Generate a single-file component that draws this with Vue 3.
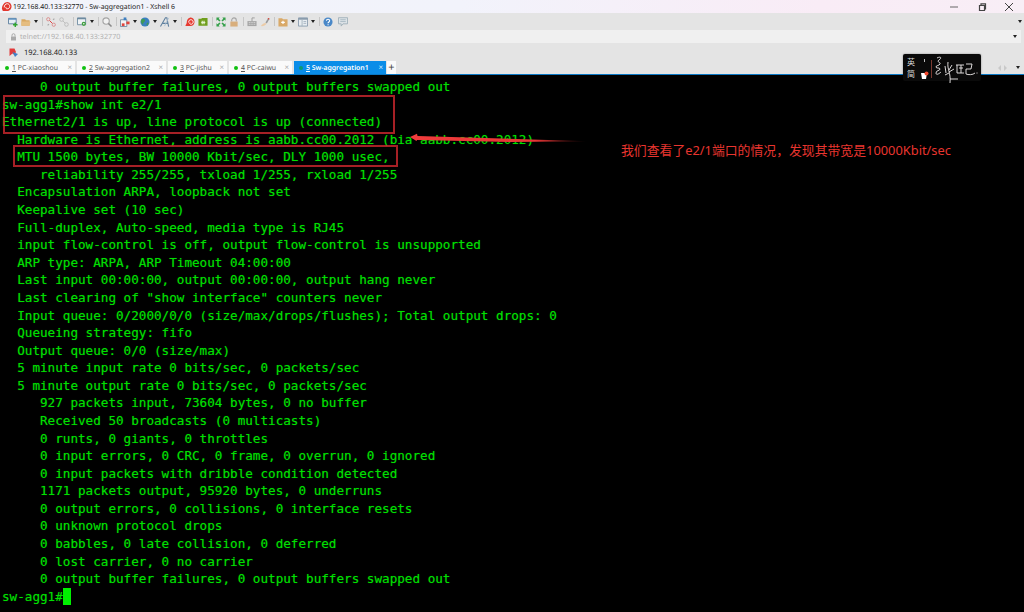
<script setup>
const lines = [
  '     0 output buffer failures, 0 output buffers swapped out',
  'sw-agg1#show int e2/1',
  'Ethernet2/1 is up, line protocol is up (connected)',
  '  Hardware is Ethernet, address is aabb.cc00.2012 (bia aabb.cc00.2012)',
  '  MTU 1500 bytes, BW 10000 Kbit/sec, DLY 1000 usec,',
  '     reliability 255/255, txload 1/255, rxload 1/255',
  '  Encapsulation ARPA, loopback not set',
  '  Keepalive set (10 sec)',
  '  Full-duplex, Auto-speed, media type is RJ45',
  '  input flow-control is off, output flow-control is unsupported',
  '  ARP type: ARPA, ARP Timeout 04:00:00',
  '  Last input 00:00:00, output 00:00:00, output hang never',
  '  Last clearing of "show interface" counters never',
  '  Input queue: 0/2000/0/0 (size/max/drops/flushes); Total output drops: 0',
  '  Queueing strategy: fifo',
  '  Output queue: 0/0 (size/max)',
  '  5 minute input rate 0 bits/sec, 0 packets/sec',
  '  5 minute output rate 0 bits/sec, 0 packets/sec',
  '     927 packets input, 73604 bytes, 0 no buffer',
  '     Received 50 broadcasts (0 multicasts)',
  '     0 runts, 0 giants, 0 throttles',
  '     0 input errors, 0 CRC, 0 frame, 0 overrun, 0 ignored',
  '     0 input packets with dribble condition detected',
  '     1171 packets output, 95920 bytes, 0 underruns',
  '     0 output errors, 0 collisions, 0 interface resets',
  '     0 unknown protocol drops',
  '     0 babbles, 0 late collision, 0 deferred',
  '     0 lost carrier, 0 no carrier',
  '     0 output buffer failures, 0 output buffers swapped out',
]
const tabs = [
  { n: '1', label: ' PC-xiaoshou', w: 75 },
  { n: '2', label: ' Sw-aggregation2', w: 89 },
  { n: '3', label: ' PC-jishu', w: 59 },
  { n: '4', label: ' PC-caiwu', w: 63 },
]
</script>

<template>
  <div class="win">
    <div class="title">
      <svg class="logo" viewBox="0 0 12 12" width="11" height="11">
        <path d="M1 8.500C1 4 4 1 7 1s4.500 2.500 4.500 5-2 5-5 5H2z" fill="#e2382f" />
        <path d="M3.500 7c0-2.500 1.500-4 3.300-4S9.500 4.500 9.500 6 8.200 8.500 6.800 8.500 5 7.500 5.500 6.500" fill="none" stroke="#fff" stroke-width="1" />
      </svg>
      <span class="title-text">192.168.40.133:32770 - Sw-aggregation1 - Xshell 6</span>
      <div class="win-ctrl">
        <svg width="10" height="10" viewBox="0 0 10 10"><path d="M1 5h8" stroke="#666" /></svg>
        <svg width="10" height="10" viewBox="0 0 10 10"><path d="M2.500 3.500h5v5h-5zM4 3.500V1.800h4.500v5H7.500" fill="none" stroke="#444" stroke-width="1.200" /></svg>
        <svg width="10" height="10" viewBox="0 0 10 10"><path d="M1 1l8 8M9 1l-8 8" stroke="#444" /></svg>
      </div>
    </div>

    <div class="toolbar">
      <svg class="ic" viewBox="0 0 11 11"><path d="M.5 1.500h8.500v6H.5z" fill="#e6eef5" stroke="#5a7d9c" /><path d="M.5 1.500h8.500v1.500H.5z" fill="#5a8fc0" /><path d="M8 6v5M5.500 8.500h5" stroke="#2fa52f" stroke-width="1.600" /></svg>
      <svg class="ic" viewBox="0 0 11 11"><path d="M.5 2.500h4l1 1h4v6H.5z" fill="#d9a860" /><path d="M.5 5h10l-1 4.500H.5z" fill="#e5bd80" /></svg>
      <i class="caret"></i>
      <i class="sep"></i>
      <svg class="ic" viewBox="0 0 11 11"><circle cx="2.500" cy="2.500" r="1.800" fill="none" stroke="#d98a8a" /><circle cx="8.500" cy="8.500" r="1.800" fill="none" stroke="#d98a8a" /><path d="M4 4l3 3" stroke="#d33" /><path d="M8 2l1 1M2 8l1 1" stroke="#aaa" stroke-width="2" /></svg>
      <svg class="ic" viewBox="0 0 11 11"><circle cx="2.800" cy="2.800" r="2" fill="none" stroke="#bbb" /><circle cx="8.200" cy="8.200" r="2" fill="none" stroke="#bbb" /><path d="M4.300 4.300l2.400 2.400" stroke="#bbb" /></svg>
      <i class="sep"></i>
      <svg class="ic" viewBox="0 0 11 11"><path d="M.5 1h9v7.500h-9z" fill="#eef2f5" stroke="#6d8aa0" /><path d="M.5 1h9v1.500h-9z" fill="#6d8aa0" /><circle cx="7.500" cy="7.500" r="2.300" fill="#3f9f3f" /><circle cx="7.500" cy="7.500" r=".8" fill="#fff" /></svg>
      <i class="caret"></i>
      <i class="sep"></i>
      <svg class="ic" viewBox="0 0 11 11"><circle cx="4.500" cy="4.500" r="3.500" fill="#f2f2f2" stroke="#a5a5a5" stroke-width="1.200" /><path d="M7 7l3.500 3.500" stroke="#8a8a8a" stroke-width="1.600" /></svg>
      <i class="sep"></i>
      <svg class="ic" viewBox="0 0 11 11"><path d="M.5 3h7v7.500h-7z" fill="#f3f3f3" stroke="#6f8ba5" /><path d="M4 .5h3v3H4z" fill="#3e7fc1" /><path d="M7 5h3.500v3H7z" fill="#e0453c" /><path d="M2 7h3v3H2z" fill="#e0453c" /></svg>
      <i class="caret"></i>
      <svg class="ic" viewBox="0 0 11 11"><circle cx="5.500" cy="5.500" r="5" fill="#3a7fc0" /><path d="M3 2c2 0 3 1 2.500 2.500S3 6 3.500 8 1 6.500 1 5 2 2 3 2zM8 6l1.500.500L8 9.500 7 8z" fill="#3f9a55" /></svg>
      <i class="caret"></i>
      <svg class="ic" viewBox="0 0 11 11"><path d="M.5 10.500L6 .8h1.500L9.500 10.500M3 7h6" fill="none" stroke="#5e7f9e" stroke-width="1.200" /><path d="M5 10L9.500 1" stroke="#a8bfd3" /></svg>
      <i class="caret"></i>
      <i class="sep"></i>
      <svg class="ic" viewBox="0 0 11 11"><path d="M.5 10c0-2 1.500-2 1.500-4.500S4 .5 6.500.5 10.500 3 10.500 5.500 8.500 10 6 10z" fill="#e63a30" /><path d="M4 6c0-2 1-3 2.500-3S9 4 9 5.500 7.800 8 6.500 8 5 7 5.500 6" fill="none" stroke="#fff" /></svg>
      <svg class="ic" viewBox="0 0 11 11"><path d="M.5 2h3l1-1h6v8.500H.5z" fill="#6f9e1c" /><path d="M4 4h1.300v4H4zM6 4h1.300v4H6zM3.500 5.500h4.500v1H3.500z" fill="#e8f3d0" /></svg>
      <i class="sep"></i>
      <svg class="ic" viewBox="0 0 11 11"><path d="M.5.500h3.500L3 1.800l2 2-1.300 1.200-2-2L.5 4zM10.500.500H7L8 1.800l-2 2 1.300 1.200 2-2 1.200 1zM.5 10.500H4L3 9.200l2-2-1.300-1.200-2 2L.5 7zM10.500 10.500H7L8 9.200l-2-2L7.300 6l2 2 1.200-1z" fill="#35a04a" /></svg>
      <svg class="ic" viewBox="0 0 11 11"><path d="M3 5V3.500a2.500 2.500 0 0 1 5 0V5" fill="none" stroke="#a5a5a5" stroke-width="1.200" /><path d="M1.500 5h8v5.500h-8z" fill="#d8ae7c" /></svg>
      <i class="sep"></i>
      <svg class="ic" viewBox="0 0 11 11"><path d="M.5 4.500h10v5.500H.5z" fill="#a5a5a5" /><path d="M2 6h7M2 8h7" stroke="#e6e6e6" stroke-dasharray="1 1" /><path d="M5.500 4.500V1h3" fill="none" stroke="#999" /></svg>
      <svg class="ic" viewBox="0 0 11 11"><path d="M6 6L9 1l1.500 1L7.500 7.200z" fill="#9a9a9a" /><path d="M9 1l1.500 1-.6 1L8.400 2z" fill="#e03a30" /><path d="M1 10c1-2 3-3.500 5-3.500l1 .8C6 9 3.500 10.500 1 10z" fill="#eccba6" /></svg>
      <i class="sep"></i>
      <svg class="ic" viewBox="0 0 11 11"><path d="M.5 1.500h4l1 1h5v8H.5z" fill="#d9a968" /><path d="M3.500 6h4M5.500 4.200v3.600" stroke="#fff" stroke-width="1.300" /></svg>
      <i class="caret"></i>
      <svg class="ic" viewBox="0 0 11 11"><path d="M.5 1h10v9H.5z" fill="#e8edf1" stroke="#8a9cad" /><path d="M.5 1h10v2H.5z" fill="#8a9cad" /><path d="M4.500 3v7M6 5h3M6 7h3" stroke="#a5b3bf" /></svg>
      <i class="caret"></i>
      <i class="sep"></i>
      <svg class="ic" viewBox="0 0 11 11"><circle cx="5.500" cy="5.500" r="5" fill="#4a88c8" /><path d="M3.800 4.200c0-2.200 3.500-2.200 3.500 0 0 1.300-1.800 1.300-1.800 2.800" fill="none" stroke="#fff" stroke-width="1.200" /><path d="M5 8h1.200v1.200H5z" fill="#fff" /></svg>
      <svg class="ic chat" viewBox="0 0 11 11"><path d="M.5.800h10v6.700H5.500L3.500 10V7.500h-3z" fill="#dde3e7" stroke="#9fb0ba" /><path d="M2.500 3h6M2.500 5h6" stroke="#a8b8c2" /></svg>
      <i class="caret end"></i>
    </div>

    <div class="addr-wrap">
      <div class="addr">
        <svg width="7" height="8" viewBox="0 0 7 8"><path d="M2 3.500V2.200a1.500 1.500 0 0 1 3 0v1.300" fill="none" stroke="#aaa" /><path d="M1 3.500h5V7.500H1z" fill="#aaa" /></svg>
        <span>telnet://192.168.40.133:32770</span>
        <i class="caret end"></i>
      </div>
    </div>

    <div class="session">
      <svg width="9" height="9" viewBox="0 0 9 9"><path d="M.5.500h5L7 4 5.500 7l-2-1.500L.5 8z" fill="#e23a3a" /><path d="M3.500 4L9 6 6 9 5 7z" fill="#3f7fc4" /></svg>
      <span>192.168.40.133</span>
    </div>

    <div class="tabbar">
      <div v-for="t in tabs" :key="t.n" class="tab" :style="{ width: t.w + 'px' }">
        <i class="dot"></i>
        <span class="tname"><u>{{ t.n }}</u>{{ t.label }}</span>
        <span class="tx">×</span>
      </div>
      <div class="tab active">
        <i class="dot"></i>
        <span class="tname"><u>5</u> Sw-aggregation1</span>
        <span class="tx">×</span>
      </div>
      <div class="plus">+</div>
      <div class="tab-nav">
        <svg width="9" height="6" viewBox="0 0 9 6"><path d="M3 0v6L0 3zM6 0v6l3-3z" fill="#c9c9c9" /></svg>
        <i class="caret"></i>
      </div>
    </div>

    <div class="term">
      <div v-for="(l, i) in lines" :key="i" class="ln">{{ l }}</div>
      <div class="ln">sw-agg1#<i class="cursor"></i></div>

      <div class="rbox box1"></div>
      <div class="rbox box2"></div>
      <svg class="arrow" width="180" height="12" viewBox="0 0 180 12">
        <defs>
          <linearGradient id="fade" x1="0" x2="1" y1="0" y2="0">
            <stop offset="0" stop-color="#f03c3c" />
            <stop offset=".7" stop-color="#e83535" />
            <stop offset="1" stop-color="#e83535" stop-opacity="0" />
          </linearGradient>
        </defs>
        <path d="M0 4L7 .8 7.500 3 178 8.200 100 9 7 7 6.500 8z" fill="url(#fade)" />
      </svg>
      <div class="note">我们查看了e2/1端口的情况，发现其带宽是10000Kbit/sec</div>
    </div>

    <div class="ime">
      <div class="ime-l"><span>英</span><span>简</span></div>
      <div class="ime-m">
        <i class="ime-d"></i>
        <svg width="9" height="9" viewBox="0 0 9 9"><path d="M1 2h6l-1 6H2z" fill="#fff" /><circle cx="6.500" cy="2.500" r="2" fill="#f0492e" /></svg>
      </div>
      <i class="ime-sep"></i>
      <svg class="ime-art" width="43" height="28" viewBox="0 0 43 28">
        <g fill="none" stroke="#f2eeee" stroke-width=".9">
          <path d="M2 2c4-2 5 0 2 2s2 2 1 4-4 1-4 3 4 0 4 2-4 1-4 4 4 0 5-1" />
          <path d="M10 10l1 7M13 6c-1 8 3 10 2 21M17 9l-3 5M19 13l-5 3M10 19l4-2" />
          <path d="M21 9h8M22 9v8h7M24 12h4M26 9v8" />
          <path d="M31 8h6l-1 5h-5v5c2 1 7 1 9-1" />
          <path d="M41.500 17h1M15 23h8" />
        </g>
      </svg>
    </div>
  </div>
</template>

<style>
html, body { margin: 0; background: #000; overflow: hidden; }
</style>

<style scoped>
.win {
  position: relative;
  width: 1024px;
  height: 612px;
  display: flex;
  flex-direction: column;
  overflow: hidden;
  font-family: "Noto Sans", "Noto Sans CJK SC", sans-serif;
}
.title {
  height: 13px;
  flex: none;
  display: flex;
  align-items: center;
  padding-left: 1px;
  background: linear-gradient(90deg, #f2f4fa 0%, #f2f3fb 45%, #f9ecf6 80%, #f8eef6 100%);
}
.logo { margin-right: 1px; }
.title-text { font-size: 6.9px; padding-top: 1px; color: #222; white-space: nowrap; text-rendering: geometricPrecision; }
.win-ctrl {
  margin-left: auto;
  display: flex;
  gap: 17.500px;
  padding-right: 10px;
}
.toolbar {
  height: 17px;
  flex: none;
  display: flex;
  align-items: center;
  gap: 3px;
  padding-left: 8px;
  padding-right: 2px;
  background: #e4e4e4;
}
.ic { width: 10px; height: 10px; flex: none; }
.chat { margin-left: 2px; }
.caret {
  width: 0;
  height: 0;
  flex: none;
  border-left: 2.500px solid transparent;
  border-right: 2.500px solid transparent;
  border-top: 3px solid #222;
}
.end { margin-left: auto; }
.sep {
  width: 1px;
  height: 9px;
  flex: none;
  background: #c6c6c6;
  margin: 0 .5px;
}
.addr-wrap {
  height: 13px;
  flex: none;
  background: #e4e4e4;
  padding: 0 3px 0 6px;
}
.addr {
  height: 13px;
  display: flex;
  align-items: center;
  gap: 3px;
  padding: 0 4px 0 4px;
  background: #f0f0f0;
  color: #b0b0b0;
  font-size: 7.2px;
  text-rendering: geometricPrecision;
}
.addr span { padding-top: 1px; }
.session {
  height: 18px;
  flex: none;
  display: flex;
  align-items: center;
  gap: 6px;
  padding-left: 9px;
  background: #e4e4e4;
  color: #222;
  font-size: 7.500px;
  text-rendering: geometricPrecision;
}
.session span { padding-top: 1px; }
.tabbar {
  height: 13px;
  flex: none;
  display: flex;
  align-items: flex-end;
  gap: 2px;
  background: #e4e4e4;
  font-size: 6.900px;
  text-rendering: geometricPrecision;
}
.tab {
  height: 13px;
  flex: none;
  display: flex;
  align-items: center;
  gap: 3px;
  padding: 0 3px 0 5px;
  box-sizing: border-box;
  background: #fafafa;
  color: #555;
  white-space: nowrap;
}
.dot { width: 4px; height: 4px; border-radius: 50%; background: #10c010; flex: none; }
.tname { white-space: pre; padding-top: 1px; }
.tx { margin-left: auto; color: #aaa; font-size: 8px; }
.active {
  width: 92px;
  background: #0a8de8;
  color: #fff;
  font-weight: 600;
}
.active .dot { background: #0b9a70; }
.active .tx { color: #d5ebfb; font-weight: 400; }
.plus {
  width: 9px;
  height: 13px;
  margin-left: -1px;
  background: #fafafa;
  color: #444;
  font-size: 11px;
  line-height: 13px;
  text-align: center;
}
.tab-nav {
  margin-left: auto;
  display: flex;
  align-items: center;
  gap: 9px;
  height: 13px;
  padding-right: 4px;
}
.term {
  position: relative;
  flex: 1;
  background: #000;
  border-top: 1px solid #0a78c4;
  padding: 3px 0 0 2px;
  color: #00e000;
  font-family: "DejaVu Sans Mono", monospace;
  font-size: 12.630px;
  text-shadow: 0 0 1px rgba(0, 224, 0, .45);
}
.ln {
  height: 17.586px;
  line-height: 17.586px;
  white-space: pre;
}
.cursor {
  display: inline-block;
  width: 8px;
  height: 17px;
  background: #00f000;
  vertical-align: top;
}
.rbox {
  position: absolute;
  border: 2px solid rgba(208, 40, 46, .8);
  box-sizing: border-box;
}
.box1 { left: 3px; top: 20px; width: 392px; height: 39px; }
.box2 { left: 13px; top: 70px; width: 385px; height: 22px; }
.arrow { position: absolute; left: 410px; top: 58px; }
.note {
  position: absolute;
  left: 621px;
  top: 66px;
  color: #e8352f;
  font-family: "Noto Sans", "Noto Sans CJK SC", sans-serif;
  font-size: 12.850px;
  line-height: 19px;
  white-space: nowrap;
  text-shadow: none;
}
.ime {
  position: absolute;
  left: 903px;
  top: 54px;
  width: 78px;
  height: 27px;
  display: flex;
  align-items: flex-start;
  background: #0a0a0a;
  border-radius: 2px;
  box-shadow: 0 0 2px rgba(0,0,0,.4);
  font-family: "Noto Sans CJK SC", sans-serif;
  color: #ddd;
}
.ime-l {
  display: flex;
  flex-direction: column;
  gap: 2px;
  padding: 3px 0 0 4px;
  font-size: 8px;
  line-height: 10px;
}
.ime-m {
  display: flex;
  flex-direction: column;
  justify-content: space-between;
  align-items: center;
  height: 22px;
  width: 12px;
  margin: 4px 0 0 3px;
}
.ime-d { width: 1px; height: 3px; margin-top: 1px; background: #bbb; }
.ime-sep { width: 1px; height: 18px; margin: 6px 0 0 1px; background: #7a3a30; }
.ime-art { margin: 2px 0 0 3px; overflow: visible; }
</style>
